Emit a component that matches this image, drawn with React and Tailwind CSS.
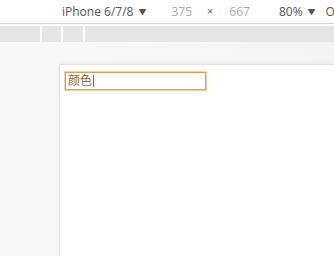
export default function App() {
  return (
    <div className="w-[334px] h-[256px] overflow-hidden bg-[#f9f9f9] flex flex-col" style={{ fontFamily: '"Open Sans", "Noto Sans CJK SC", sans-serif' }}>
      {/* device toolbar */}
      <div className="h-[23px] bg-white flex items-center text-[12px] text-[#555] shrink-0 whitespace-nowrap">
        <span className="ml-[62px]">iPhone 6/7/8</span>
        <span className="ml-[5px] text-[8px]">▼</span>
        <span className="ml-[25px] text-[#aaa]">375</span>
        <span className="ml-[15px] text-[#666] text-[11px]">×</span>
        <span className="ml-[16px] text-[#aaa]">667</span>
        <span className="ml-[29px]">80%</span>
        <span className="ml-[5px] text-[8px]">▼</span>
        <span className="ml-[10px]">On</span>
      </div>
      <div className="h-px bg-[#d4d4d4] shrink-0" />
      <div className="h-[2px] bg-white shrink-0" />
      <div className="h-[16px] flex gap-[2px] shrink-0 bg-white">
        <div className="w-[40px] bg-[#e6e6e6]" />
        <div className="w-[19px] bg-[#e6e6e6]" />
        <div className="w-[20px] bg-[#e6e6e6]" />
        <div className="flex-1 bg-[#e6e6e6]" />
      </div>
      {/* viewport */}
      <div className="flex-1 pl-[59px] pt-[22px] bg-gradient-to-r from-[#f9f9f9] to-[#f4f4f4]">
        <div className="h-full bg-white border-l border-t border-[#e2e2e2] shadow-[0_0_6px_rgba(0,0,0,0.06)] pl-[5px] pt-[7px]">
          <div className="w-[141px] h-[18px] border border-[#d9a05c] ring-1 ring-[#f0d2aa] flex items-center px-[2px] text-[12px] text-[#8a6644] leading-none">
            颜色<span className="w-px h-[12px] bg-[#8a6644] ml-px" />
          </div>
        </div>
      </div>
    </div>
  );
}
